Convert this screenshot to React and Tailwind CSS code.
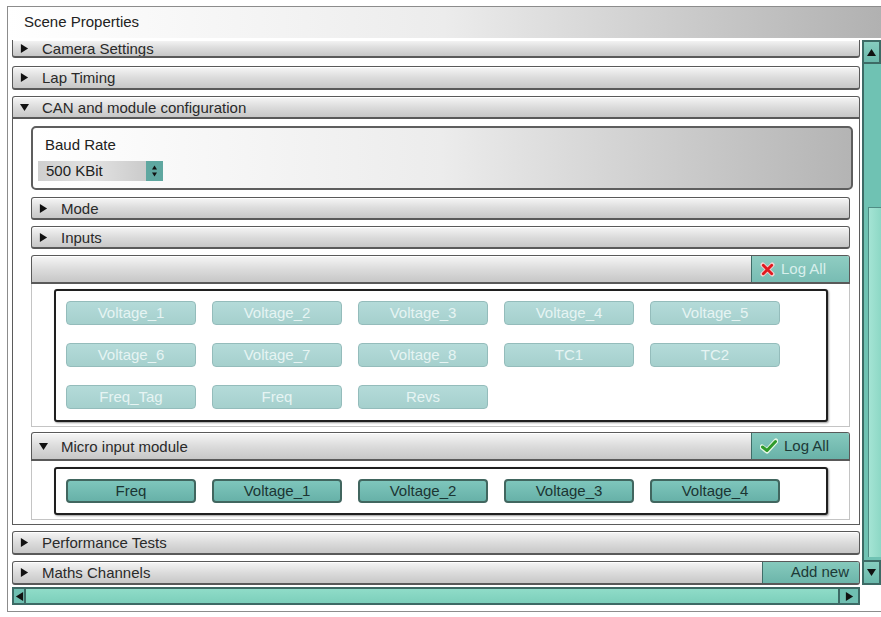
import React from "react";

// Small filled triangle used on collapsible headers and scroll arrows
const Tri = ({ dir = "right", className = "" }) => {
  const pts = {
    right: "1,0 9,5 1,10",
    down: "0,1 10,1 5,9",
    up: "0,9 10,9 5,1",
    left: "9,0 1,5 9,10",
  }[dir];
  return (
    <svg viewBox="0 0 10 10" className={`w-[9px] h-[9px] shrink-0 ${className}`}>
      <polygon points={pts} fill="#111" />
    </svg>
  );
};

const Header = ({ title, open, h = "h-[24px]", className = "", children }) => (
  <div
    className={`flex items-center ${h} shrink-0 overflow-hidden rounded-[3px] border border-[#595959] border-b-2 bg-linear-to-b from-[#f6f6f6] via-[#dcdcdc] to-[#c7c7c7] shadow-[inset_0_1px_0_#ffffff] ${className}`}
  >
    {title !== undefined && (
      <>
        <Tri dir={open ? "down" : "right"} className="ml-[7px]" />
        <span className="ml-[13px] text-[15px] leading-none text-[#2a2a2a]">{title}</span>
      </>
    )}
    {children}
  </div>
);

const CrossIcon = () => (
  <svg viewBox="0 0 16 16" className="w-[15px] h-[15px]">
    <path d="M3 3 L13 13 M13 3 L3 13" stroke="#f4d0d0" strokeWidth="5" strokeLinecap="round" />
    <path d="M3.5 3.5 L12.5 12.5 M12.5 3.5 L3.5 12.5" stroke="#e0191f" strokeWidth="3" strokeLinecap="round" />
  </svg>
);

const CheckIcon = () => (
  <svg viewBox="0 0 18 16" className="w-[18px] h-[16px]">
    <path d="M2 9 L7 13 L16 3" fill="none" stroke="#e4f6e4" strokeWidth="5" strokeLinecap="round" strokeLinejoin="round" />
    <path d="M2.5 9 L7 12.5 L15.5 3.5" fill="none" stroke="#2f9a2a" strokeWidth="3" strokeLinecap="round" strokeLinejoin="round" />
  </svg>
);

const LogAll = ({ enabled }) => (
  <div
    className={`ml-auto flex h-full w-[98px] items-center gap-[6px] border-l border-[#3f6e69] pl-[8px] ${
      enabled ? "bg-linear-to-b from-[#86c9be] to-[#69b2a8]" : "bg-linear-to-b from-[#8fcdc2] to-[#78bcb3]"
    }`}
  >
    {enabled ? <CheckIcon /> : <CrossIcon />}
    <span className={`text-[15px] ${enabled ? "text-[#1d3a37]" : "text-[#d8efec]"}`}>Log All</span>
  </div>
);

const Chip = ({ label, enabled }) => (
  <div
    className={`flex h-[24px] w-[130px] items-center justify-center rounded-[4px] text-[15px] ${
      enabled
        ? "border-2 border-[#41665f] bg-linear-to-b from-[#7ec6bc] to-[#67b1a8] text-[#1b3533]"
        : "border border-[#94bcbb] bg-linear-to-b from-[#b4dbd9] to-[#a5d0cd] text-[#e6f4f3]"
    }`}
  >
    {label}
  </div>
);

const inputs = ["Voltage_1", "Voltage_2", "Voltage_3", "Voltage_4", "Voltage_5", "Voltage_6", "Voltage_7", "Voltage_8", "TC1", "TC2", "Freq_Tag", "Freq", "Revs"];
const micro = ["Freq", "Voltage_1", "Voltage_2", "Voltage_3", "Voltage_4"];

const ChipBox = ({ items, enabled, className = "" }) => (
  <div className={`rounded-[3px] border-2 border-[#1f1f1f] bg-white shadow-[1px_1px_2px_#9a9a9a] ${className}`}>
    <div className="grid grid-cols-[repeat(5,130px)] gap-x-[16px] gap-y-[18px]">
      {items.map((n, i) => (
        <Chip key={i} label={n} enabled={enabled} />
      ))}
    </div>
  </div>
);

export default function App() {
  return (
    <div className="h-[617px] w-[881px] overflow-hidden bg-white pl-[7px] pt-[6px] font-['Liberation_Sans',Arial,sans-serif]">
      <div className="h-[606px] border-l border-t border-b border-[#8c8c8c]">
        {/* title bar */}
        <div className="flex h-[31px] items-center bg-linear-to-r from-white via-[#ececec] to-[#b1b1b1] pl-[16px]">
          <span className="text-[15px] text-[#222]">Scene Properties</span>
        </div>

        <div className="mt-[2px] flex h-[545px]">
          {/* property list, scrolled a little so the first row is cut at the top */}
          <div className="ml-[4px] flex w-[848px] flex-col overflow-hidden">
            <Header title="Camera Settings" h="h-[18px]" className="rounded-t-none border-t-0" />
            <Header title="Lap Timing" className="mt-[8px]" />
            <Header title="CAN and module configuration" open h="h-[23px]" className="mt-[6px] rounded-b-none" />

            <div className="shrink-0 border-x border-b border-[#5b5b5b] bg-white pb-[4px] pl-[18px] pr-[6px] pt-[7px]">
              {/* baud rate */}
              <div className="h-[64px] rounded-[5px] border-2 border-[#5e5e5e] bg-linear-to-r from-white via-[#ececec] to-[#b4b4b4] pl-[5px] pt-[9px]">
                <div className="ml-[7px] text-[15px] leading-none text-[#222]">Baud Rate</div>
                <div className="mt-[9px] flex h-[20px] w-[125px]">
                  <div className="flex w-[108px] items-center bg-linear-to-r from-[#cfcfcf] via-[#e2e2e2] to-[#cbcbcb] pl-[8px] text-[15px] text-[#222]">
                    500 KBit
                  </div>
                  <div className="flex w-[17px] flex-col items-center justify-center gap-[2px] bg-[#5fa7a0]">
                    <Tri dir="up" className="!h-[5px] !w-[5px]" />
                    <Tri dir="down" className="!h-[5px] !w-[5px]" />
                  </div>
                </div>
              </div>

              <div className="mr-[3px]">
                <Header title="Mode" h="h-[23px]" className="mt-[7px]" />
                <Header title="Inputs" h="h-[23px]" className="mt-[6px]" />

                {/* inputs module (logging off) */}
                <Header h="h-[29px]" className="mt-[6px] rounded-b-none">
                  <LogAll enabled={false} />
                </Header>
                <div className="border-x border-b border-[#c4c4c4] pb-[4px] pl-[22px] pr-[21px] pt-[5px]">
                  <ChipBox items={inputs} enabled={false} className="h-[133px] pl-[10px] pt-[10px]" />
                </div>

                {/* micro input module */}
                <Header title="Micro input module" open h="h-[29px]" className="mt-[5px] rounded-b-none">
                  <LogAll enabled />
                </Header>
                <div className="border-x border-b border-[#c4c4c4] pb-[4px] pl-[22px] pr-[21px] pt-[6px]">
                  <ChipBox items={micro} enabled className="h-[48px] pl-[10px] pt-[10px]" />
                </div>
              </div>
            </div>

            <Header title="Performance Tests" className="mt-[6px]" />
            <Header title="Maths Channels" className="mt-[6px]">
              <div className="ml-auto flex h-full w-[97px] items-center justify-end border-l border-[#3f6e69] bg-linear-to-b from-[#86cabd] to-[#6cb5aa] pr-[10px] text-[15px] text-[#1d3a37]">
                Add new
              </div>
            </Header>
          </div>

          {/* vertical scrollbar */}
          <div className="ml-[2px] flex w-[19px] flex-col border-l-2 border-[#3d6a65] bg-[#6fc2b3]">
            <div className="flex h-[24px] items-center justify-center border-2 border-l-0 border-[#3d6a65] bg-linear-to-b from-[#86cdbf] to-[#6ab8ab]">
              <Tri dir="up" />
            </div>
            <div className="h-[143px]" />
            <div className="ml-[4px] h-[350px] border-l border-t border-[#4f8c84] bg-linear-to-r from-[#a4e4d4] to-[#8dd8c5]" />
            <div className="mt-auto flex h-[25px] items-center justify-center border-2 border-l-0 border-[#3d6a65] bg-linear-to-b from-[#86cdbf] to-[#6ab8ab]">
              <Tri dir="down" />
            </div>
          </div>
        </div>

        {/* horizontal scrollbar */}
        <div className="ml-[4px] mt-[2px] flex h-[18px] w-[848px] border-2 border-[#3d6a65] bg-linear-to-b from-[#8fdcc8] to-[#7ccfbb]">
          <div className="flex w-[12px] items-center justify-center border-r-2 border-[#3d6a65] bg-[#6fbfb1]">
            <Tri dir="left" />
          </div>
          <div className="flex-1" />
          <div className="flex w-[20px] items-center justify-center border-l-2 border-[#3d6a65] bg-[#6fbfb1]">
            <Tri dir="right" />
          </div>
        </div>
      </div>
    </div>
  );
}
